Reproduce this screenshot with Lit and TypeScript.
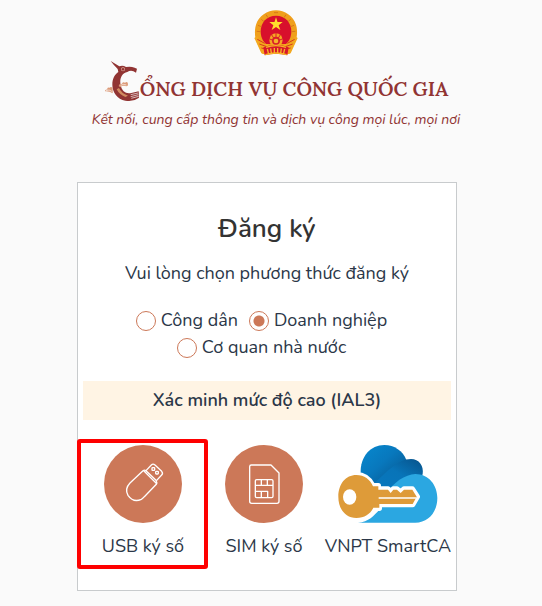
import { LitElement, html, css, svg } from "lit";
import { customElement, state } from "lit/decorators.js";

const emblem = svg`
  <path d="M66 1C92 1 118 18 126 44C132 64 130 88 118 108L106 132L66 126L26 132L14 108C2 88 0 64 6 44C14 18 40 1 66 1Z" fill="#f0a01c"/>
  <path d="M1 84L10 78L18 100L34 84L44 112L36 134L22 130Z" fill="#f3a81e"/>
  <path d="M131 84L122 78L114 100L98 84L88 112L96 134L110 130Z" fill="#f3a81e"/>
  <path d="M66 17C94 17 112 38 112 64C112 80 106 94 96 102H36C26 94 20 80 20 64C20 38 38 17 66 17Z" fill="#d8102c"/>
  <path d="M66 22L70.500 36H86L74 45.500L79 60L66 51L53 60L58 45.500L46 36H61.500Z" fill="#ffdf2c"/>
  <path d="M22 28l8 7M12 46l10 4M8 64l11 1M36 14l6 9M110 28l-8 7M120 46l-10 4M124 64l-11 1M96 14l-6 9M60 8h12" stroke="#d8781a" stroke-width="3" fill="none"/>
  <path d="M10 88l22 12M16 102l22 8M22 114l16 4M122 88l-22 12M116 102l-22 8M110 114l-16 4" stroke="#d8391c" stroke-width="3" fill="none"/>
  <circle cx="66" cy="90" r="20" fill="#f5a623"/>
  <circle cx="66" cy="92" r="12" fill="#d8202a"/>
  <path d="M66 68v14M52 73l7 11M80 73l-7 11M45 86l12 5M87 86l-12 5" stroke="#d8202a" stroke-width="3"/>
  <circle cx="66" cy="93" r="7" fill="#f5b42a"/>
  <path d="M28 112Q66 98 104 112L100 136Q66 126 32 136Z" fill="#d8172a"/>
  <path d="M40 117l4 16M50 115l2 15M61 114v14M71 114v14M82 115l-2 15M92 117l-4 16M36 112Q66 102 96 112M34 134Q66 124 98 134" stroke="#f6b526" stroke-width="4" fill="none"/>`;

const bird = svg`
  <path d="M98 33L124 49Q134 44 144 51Q158 48 170 53L177 56L174 68Q160 58 148 66C130 70 124 88 128 106C132 124 144 133 160 129L182 124L183 143Q164 157 142 152C118 147 103 127 103 104C103 86 110 74 121 66L119 57L107 44Z" fill="#913433"/>
  <circle cx="135" cy="58" r="6" fill="#e3b3a0"/>
  <circle cx="135" cy="58" r="4" fill="#913433"/>
  <path d="M116 118Q124 134 142 141L150 137Q130 130 123 114Z" fill="#d18b60"/>
  <path d="M81 124Q81 118 88 119Q86 111 95 113Q99 108 104 114V130Q94 123 81 124ZM122 108Q124 100 132 102Q133 94 141 98Q149 92 150 102Q151 109 145 109Q134 105 127 112Z" fill="#dc9a78"/>
  <path d="M84 122Q94 117 101 124M128 106Q136 101 145 105" stroke="#fafafa" stroke-width="2" fill="none"/>
  <path d="M158 134L180 129M158 140L181 134M160 145L182 139" stroke="#fafafa" stroke-width="2"/>`;

const usb = svg`
  <circle cx="117" cy="117" r="117" fill="#cc7858"/>
  <g fill="none" stroke="#fff" stroke-width="4" stroke-linejoin="round" stroke-linecap="round">
    <path d="M117 77L78 114Q61 132 72 151Q88 174 112 163Q116 161 121 155L157 118Q160 113 156 106L126 77Q121 74 117 77Z"/>
    <path d="M120 78L156 114M126 77L142 60Q147 55 153 60L173 79Q178 85 173 90L158 106"/>
    <rect x="144" y="68" width="8" height="8" rx="2"/>
    <rect x="155" y="79" width="8" height="8" rx="2"/>
  </g>`;

const sim = svg`
  <circle cx="117" cy="117" r="117" fill="#cc7858"/>
  <g fill="none" stroke="#fff" stroke-width="4" stroke-linejoin="round">
    <path d="M79 60H138L162 84V169Q162 175 156 175H80Q74 175 74 169V65Q74 60 79 60Z"/>
    <rect x="91" y="104" width="53" height="54" rx="4"/>
    <path d="M91 121H144M109 104V121M127 104V121M91 139H128V158M109 139V158"/>
  </g>`;

const cloudKey = svg`
  <defs>
    <linearGradient id="back" x1="0" y1="0" x2="1" y2="1">
      <stop offset="0" stop-color="#0789cf"/><stop offset=".45" stop-color="#0878bd"/><stop offset="1" stop-color="#075187"/>
    </linearGradient>
    <linearGradient id="mid" x1="0" y1="1" x2="1" y2="0">
      <stop offset="0" stop-color="#0877bd"/><stop offset=".5" stop-color="#0874b8"/><stop offset="1" stop-color="#07528a"/>
    </linearGradient>
  </defs>
  <path d="M68 84C66 35 98 0 139 0C169 0 195 18 205 45L160 120L116 122Z" fill="url(#back)"/>
  <path d="M112 112C145 82 180 42 219 42C243 42 258 62 254 88L230 128H120Z" fill="url(#mid)"/>
  <path d="M60 233C92 231 108 211 124 194L140 150C166 112 202 88 232 87C272 87 298 120 298 159C298 200 272 233 232 233Z" fill="#2ba7e1"/>
  <path d="M55 89C79 89 94 101 105 122H121V132H150L158 142L166 132H177L188 142L198 132H223L238 155L224 179H124V190H106C98 214 78 219 55 219C20 219 0 191 0 155C0 117 22 89 55 89Z" fill="#fff" stroke="#fff" stroke-width="16" stroke-linejoin="round"/>
  <path d="M55 90C79 90 96 103 105 124H121V134H150L158 144L166 134H177L188 144L198 134H223L236 155L224 177H124V188H106C97 207 80 219 55 219C21 219 1 190 1 155C1 117 23 90 55 90Z" fill="#de9b39"/>
  <ellipse cx="35" cy="156" rx="20" ry="23" fill="#fff"/>
  <path d="M122 159H234" stroke="#fff" stroke-width="5"/>`;

@customElement("app-root")
export class AppRoot extends LitElement {
  @state() private account = "business";

  private accounts = [
    { id: "citizen", label: "Công dân" },
    { id: "business", label: "Doanh nghiệp" },
    { id: "agency", label: "Cơ quan nhà nước" },
  ];

  static styles = css`
    :host {
      display: block;
      min-height: 100vh;
      box-sizing: border-box;
      padding: 10px 0 15px;
      background: #fafafa;
      color: #2b3748;
      font: 18px/27px Nunito, Lato, "Noto Sans", sans-serif;
    }
    * { box-sizing: border-box; }
    svg { display: block; }
    header {
      display: flex;
      flex-direction: column;
      align-items: center;
      padding-left: 10px;
      color: #913433;
    }
    .emblem { width: 44px; height: 46px; }
    .brand {
      display: flex;
      align-items: flex-end;
      margin-top: 4px;
    }
    .bird { width: 36px; height: 42px; }
    .name {
      font: 600 20px/26px Lora, "Liberation Serif", serif;
      white-space: nowrap;
    }
    .tagline {
      margin: 5px 0 0;
      font-size: 14px;
      line-height: 26px;
      font-style: italic;
    }
    main { padding-right: 8px; }
    .card {
      width: 71%;
      min-width: 380px;
      margin: 49px auto 0;
      padding: 26px 0 21px;
      border: 1px solid #c8cbcd;
      background: #fff;
      text-align: center;
    }
    h1 {
      margin: 0;
      font-size: 26px;
      font-weight: 600;
      line-height: 40px;
      color: #333;
    }
    .hint { margin: 11px 0 0; }
    .accounts {
      display: flex;
      flex-wrap: wrap;
      justify-content: center;
      margin: 20px 40px;
      padding: 0;
      border: 0;
    }
    .account {
      display: flex;
      align-items: center;
      gap: 5px;
      padding-right: 11px;
    }
    .account input {
      appearance: none;
      width: 20px;
      height: 20px;
      margin: 0;
      border: 1px solid #cc7858;
      border-radius: 50%;
      background: #fff;
    }
    .account input:checked {
      background: radial-gradient(circle, #cc7858 5px, #fff 6px);
    }
    h2 {
      margin: 0 5px;
      font-size: 18px;
      font-weight: 600;
      line-height: 39px;
      background: #fff4e4;
    }
    .methods {
      display: grid;
      grid-template-columns: 130fr 112fr 136fr;
      margin-top: 19px;
    }
    .method {
      position: relative;
      display: flex;
      flex-direction: column;
      align-items: center;
      gap: 9px;
      padding: 6px 0 9px;
      border: 0;
      background: none;
      color: inherit;
      font: inherit;
      line-height: 28px;
      white-space: nowrap;
    }
    .disc { width: 78px; height: 78px; }
    .cloud { width: 100px; height: 78px; }
    .marked::after {
      content: "";
      position: absolute;
      inset: 0 0 0 -1px;
      border: 4px solid #fe0000;
      border-radius: 3px;
    }
  `;

  render() {
    return html`
      <header>
        <svg class="emblem" viewBox="0 0 132 138" aria-hidden="true">${emblem}</svg>
        <div class="brand">
          <svg class="bird" viewBox="78 30 108 126" aria-hidden="true">${bird}</svg>
          <span class="name">ỔNG DỊCH VỤ CÔNG QUỐC GIA</span>
        </div>
        <p class="tagline">Kết nối, cung cấp thông tin và dịch vụ công mọi lúc, mọi nơi</p>
      </header>
      <main>
        <section class="card">
          <h1>Đăng ký</h1>
          <p class="hint">Vui lòng chọn phương thức đăng ký</p>
          <fieldset class="accounts">
            ${this.accounts.map(
              (a) => html`<label class="account">
                <input
                  type="radio"
                  name="account"
                  .checked=${this.account === a.id}
                  @change=${() => (this.account = a.id)}
                />
                <span>${a.label}</span>
              </label>`
            )}
          </fieldset>
          <h2>Xác minh mức độ cao (IAL3)</h2>
          <div class="methods">
            <button class="method marked" type="button">
              <svg class="disc" viewBox="0 0 234 234" aria-hidden="true">${usb}</svg>
              <span>USB ký số</span>
            </button>
            <button class="method" type="button">
              <svg class="disc" viewBox="0 0 234 234" aria-hidden="true">${sim}</svg>
              <span>SIM ký số</span>
            </button>
            <button class="method" type="button">
              <svg class="cloud" viewBox="0 0 300 234" aria-hidden="true">${cloudKey}</svg>
              <span>VNPT SmartCA</span>
            </button>
          </div>
        </section>
      </main>
    `;
  }
}
